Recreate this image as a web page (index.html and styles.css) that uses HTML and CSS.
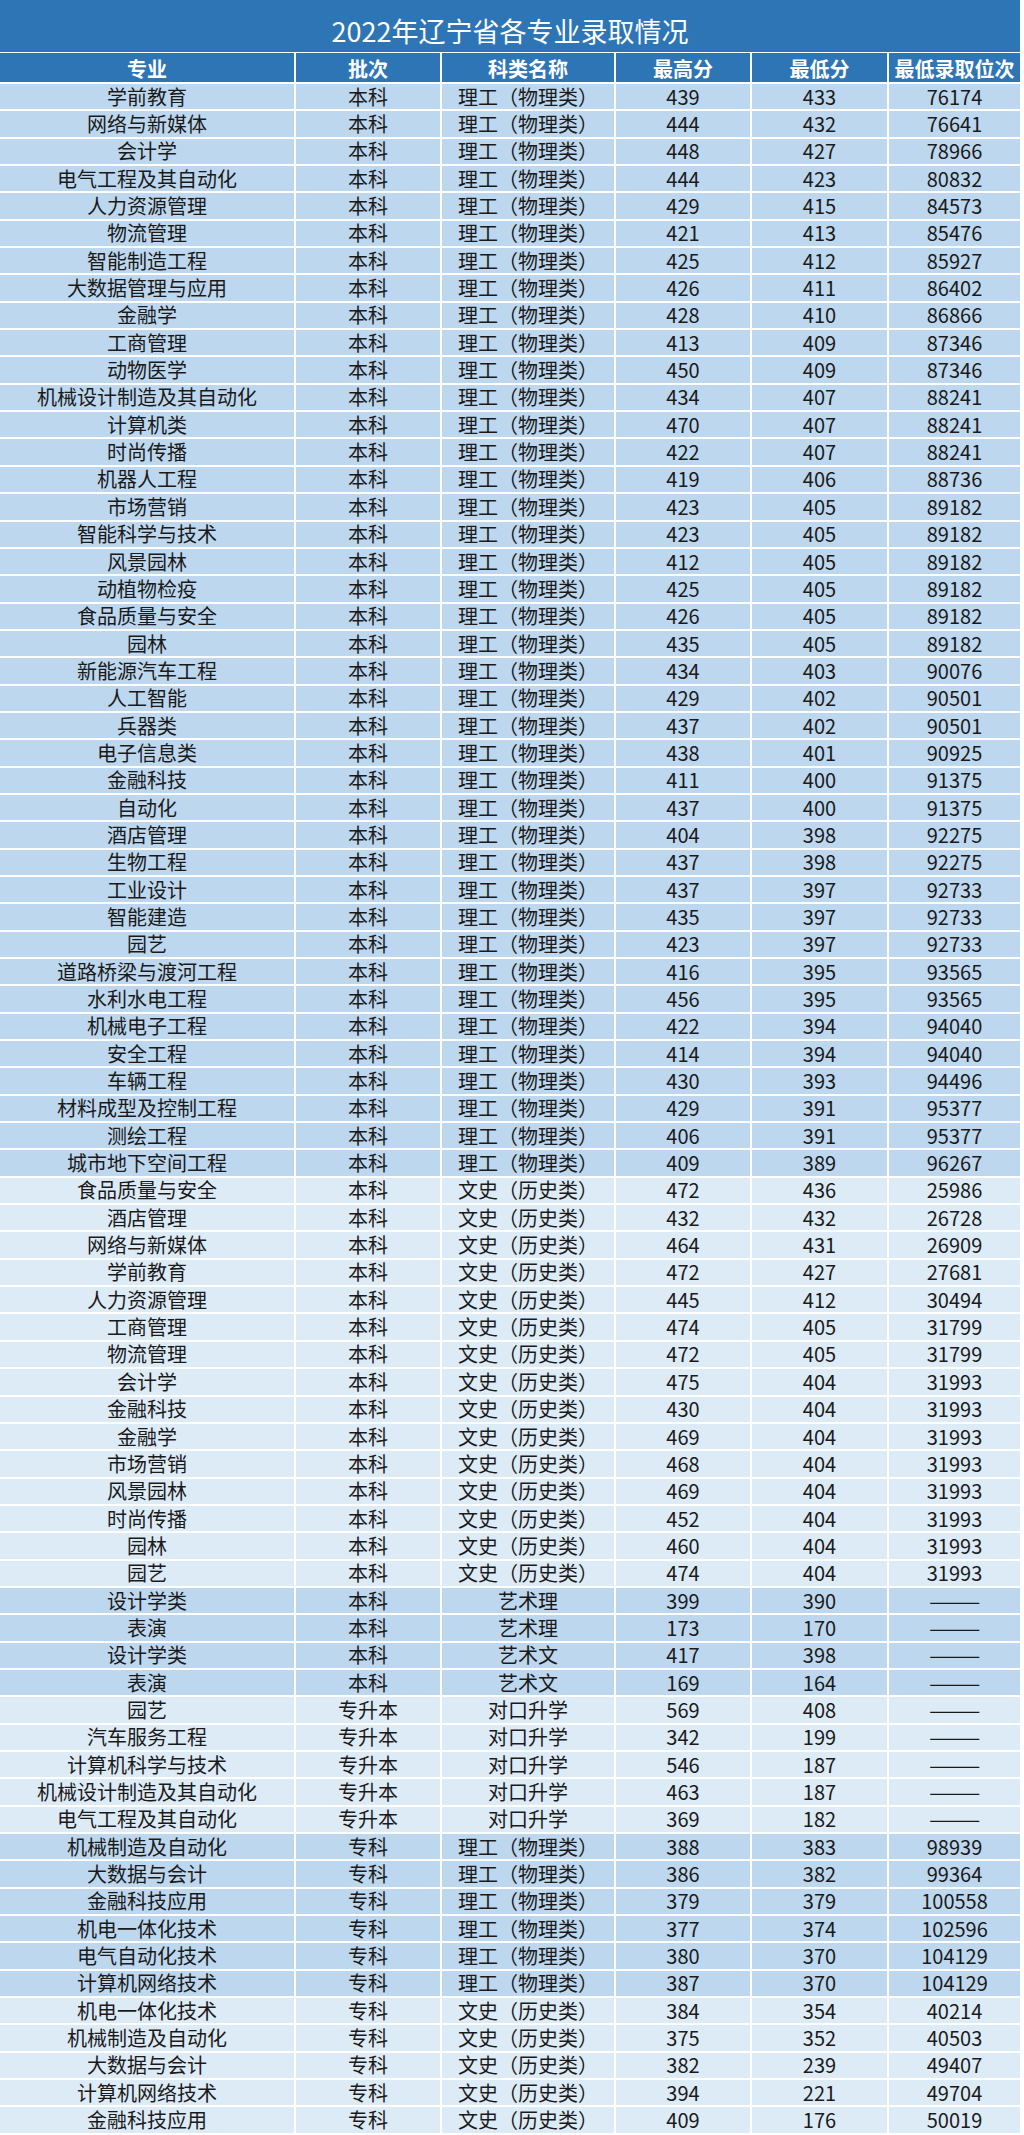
FILE: index.html
```html
<!DOCTYPE html>
<html lang="zh-CN">
<head>
<meta charset="utf-8">
<title>2022年辽宁省各专业录取情况</title>
<link rel="stylesheet" href="styles.css">
</head>
<body>
<div class="sheet">
<div class="title">2022年辽宁省各专业录取情况</div>
<div class="row head"><span>专业</span><span>批次</span><span>科类名称</span><span>最高分</span><span>最低分</span><span>最低录取位次</span></div>
<div class="row a"><span>学前教育</span><span>本科</span><span>理工（物理类）</span><span>439</span><span>433</span><span>76174</span></div>
<div class="row a"><span>网络与新媒体</span><span>本科</span><span>理工（物理类）</span><span>444</span><span>432</span><span>76641</span></div>
<div class="row a"><span>会计学</span><span>本科</span><span>理工（物理类）</span><span>448</span><span>427</span><span>78966</span></div>
<div class="row a"><span>电气工程及其自动化</span><span>本科</span><span>理工（物理类）</span><span>444</span><span>423</span><span>80832</span></div>
<div class="row a"><span>人力资源管理</span><span>本科</span><span>理工（物理类）</span><span>429</span><span>415</span><span>84573</span></div>
<div class="row a"><span>物流管理</span><span>本科</span><span>理工（物理类）</span><span>421</span><span>413</span><span>85476</span></div>
<div class="row a"><span>智能制造工程</span><span>本科</span><span>理工（物理类）</span><span>425</span><span>412</span><span>85927</span></div>
<div class="row a"><span>大数据管理与应用</span><span>本科</span><span>理工（物理类）</span><span>426</span><span>411</span><span>86402</span></div>
<div class="row a"><span>金融学</span><span>本科</span><span>理工（物理类）</span><span>428</span><span>410</span><span>86866</span></div>
<div class="row a"><span>工商管理</span><span>本科</span><span>理工（物理类）</span><span>413</span><span>409</span><span>87346</span></div>
<div class="row a"><span>动物医学</span><span>本科</span><span>理工（物理类）</span><span>450</span><span>409</span><span>87346</span></div>
<div class="row a"><span>机械设计制造及其自动化</span><span>本科</span><span>理工（物理类）</span><span>434</span><span>407</span><span>88241</span></div>
<div class="row a"><span>计算机类</span><span>本科</span><span>理工（物理类）</span><span>470</span><span>407</span><span>88241</span></div>
<div class="row a"><span>时尚传播</span><span>本科</span><span>理工（物理类）</span><span>422</span><span>407</span><span>88241</span></div>
<div class="row a"><span>机器人工程</span><span>本科</span><span>理工（物理类）</span><span>419</span><span>406</span><span>88736</span></div>
<div class="row a"><span>市场营销</span><span>本科</span><span>理工（物理类）</span><span>423</span><span>405</span><span>89182</span></div>
<div class="row a"><span>智能科学与技术</span><span>本科</span><span>理工（物理类）</span><span>423</span><span>405</span><span>89182</span></div>
<div class="row a"><span>风景园林</span><span>本科</span><span>理工（物理类）</span><span>412</span><span>405</span><span>89182</span></div>
<div class="row a"><span>动植物检疫</span><span>本科</span><span>理工（物理类）</span><span>425</span><span>405</span><span>89182</span></div>
<div class="row a"><span>食品质量与安全</span><span>本科</span><span>理工（物理类）</span><span>426</span><span>405</span><span>89182</span></div>
<div class="row a"><span>园林</span><span>本科</span><span>理工（物理类）</span><span>435</span><span>405</span><span>89182</span></div>
<div class="row a"><span>新能源汽车工程</span><span>本科</span><span>理工（物理类）</span><span>434</span><span>403</span><span>90076</span></div>
<div class="row a"><span>人工智能</span><span>本科</span><span>理工（物理类）</span><span>429</span><span>402</span><span>90501</span></div>
<div class="row a"><span>兵器类</span><span>本科</span><span>理工（物理类）</span><span>437</span><span>402</span><span>90501</span></div>
<div class="row a"><span>电子信息类</span><span>本科</span><span>理工（物理类）</span><span>438</span><span>401</span><span>90925</span></div>
<div class="row a"><span>金融科技</span><span>本科</span><span>理工（物理类）</span><span>411</span><span>400</span><span>91375</span></div>
<div class="row a"><span>自动化</span><span>本科</span><span>理工（物理类）</span><span>437</span><span>400</span><span>91375</span></div>
<div class="row a"><span>酒店管理</span><span>本科</span><span>理工（物理类）</span><span>404</span><span>398</span><span>92275</span></div>
<div class="row a"><span>生物工程</span><span>本科</span><span>理工（物理类）</span><span>437</span><span>398</span><span>92275</span></div>
<div class="row a"><span>工业设计</span><span>本科</span><span>理工（物理类）</span><span>437</span><span>397</span><span>92733</span></div>
<div class="row a"><span>智能建造</span><span>本科</span><span>理工（物理类）</span><span>435</span><span>397</span><span>92733</span></div>
<div class="row a"><span>园艺</span><span>本科</span><span>理工（物理类）</span><span>423</span><span>397</span><span>92733</span></div>
<div class="row a"><span>道路桥梁与渡河工程</span><span>本科</span><span>理工（物理类）</span><span>416</span><span>395</span><span>93565</span></div>
<div class="row a"><span>水利水电工程</span><span>本科</span><span>理工（物理类）</span><span>456</span><span>395</span><span>93565</span></div>
<div class="row a"><span>机械电子工程</span><span>本科</span><span>理工（物理类）</span><span>422</span><span>394</span><span>94040</span></div>
<div class="row a"><span>安全工程</span><span>本科</span><span>理工（物理类）</span><span>414</span><span>394</span><span>94040</span></div>
<div class="row a"><span>车辆工程</span><span>本科</span><span>理工（物理类）</span><span>430</span><span>393</span><span>94496</span></div>
<div class="row a"><span>材料成型及控制工程</span><span>本科</span><span>理工（物理类）</span><span>429</span><span>391</span><span>95377</span></div>
<div class="row a"><span>测绘工程</span><span>本科</span><span>理工（物理类）</span><span>406</span><span>391</span><span>95377</span></div>
<div class="row a"><span>城市地下空间工程</span><span>本科</span><span>理工（物理类）</span><span>409</span><span>389</span><span>96267</span></div>
<div class="row b"><span>食品质量与安全</span><span>本科</span><span>文史（历史类）</span><span>472</span><span>436</span><span>25986</span></div>
<div class="row b"><span>酒店管理</span><span>本科</span><span>文史（历史类）</span><span>432</span><span>432</span><span>26728</span></div>
<div class="row b"><span>网络与新媒体</span><span>本科</span><span>文史（历史类）</span><span>464</span><span>431</span><span>26909</span></div>
<div class="row b"><span>学前教育</span><span>本科</span><span>文史（历史类）</span><span>472</span><span>427</span><span>27681</span></div>
<div class="row b"><span>人力资源管理</span><span>本科</span><span>文史（历史类）</span><span>445</span><span>412</span><span>30494</span></div>
<div class="row b"><span>工商管理</span><span>本科</span><span>文史（历史类）</span><span>474</span><span>405</span><span>31799</span></div>
<div class="row b"><span>物流管理</span><span>本科</span><span>文史（历史类）</span><span>472</span><span>405</span><span>31799</span></div>
<div class="row b"><span>会计学</span><span>本科</span><span>文史（历史类）</span><span>475</span><span>404</span><span>31993</span></div>
<div class="row b"><span>金融科技</span><span>本科</span><span>文史（历史类）</span><span>430</span><span>404</span><span>31993</span></div>
<div class="row b"><span>金融学</span><span>本科</span><span>文史（历史类）</span><span>469</span><span>404</span><span>31993</span></div>
<div class="row b"><span>市场营销</span><span>本科</span><span>文史（历史类）</span><span>468</span><span>404</span><span>31993</span></div>
<div class="row b"><span>风景园林</span><span>本科</span><span>文史（历史类）</span><span>469</span><span>404</span><span>31993</span></div>
<div class="row b"><span>时尚传播</span><span>本科</span><span>文史（历史类）</span><span>452</span><span>404</span><span>31993</span></div>
<div class="row b"><span>园林</span><span>本科</span><span>文史（历史类）</span><span>460</span><span>404</span><span>31993</span></div>
<div class="row b"><span>园艺</span><span>本科</span><span>文史（历史类）</span><span>474</span><span>404</span><span>31993</span></div>
<div class="row a"><span>设计学类</span><span>本科</span><span>艺术理</span><span>399</span><span>390</span><span><i class="dash">——</i></span></div>
<div class="row a"><span>表演</span><span>本科</span><span>艺术理</span><span>173</span><span>170</span><span><i class="dash">——</i></span></div>
<div class="row a"><span>设计学类</span><span>本科</span><span>艺术文</span><span>417</span><span>398</span><span><i class="dash">——</i></span></div>
<div class="row a"><span>表演</span><span>本科</span><span>艺术文</span><span>169</span><span>164</span><span><i class="dash">——</i></span></div>
<div class="row b"><span>园艺</span><span>专升本</span><span>对口升学</span><span>569</span><span>408</span><span><i class="dash">——</i></span></div>
<div class="row b"><span>汽车服务工程</span><span>专升本</span><span>对口升学</span><span>342</span><span>199</span><span><i class="dash">——</i></span></div>
<div class="row b"><span>计算机科学与技术</span><span>专升本</span><span>对口升学</span><span>546</span><span>187</span><span><i class="dash">——</i></span></div>
<div class="row b"><span>机械设计制造及其自动化</span><span>专升本</span><span>对口升学</span><span>463</span><span>187</span><span><i class="dash">——</i></span></div>
<div class="row b"><span>电气工程及其自动化</span><span>专升本</span><span>对口升学</span><span>369</span><span>182</span><span><i class="dash">——</i></span></div>
<div class="row a"><span>机械制造及自动化</span><span>专科</span><span>理工（物理类）</span><span>388</span><span>383</span><span>98939</span></div>
<div class="row a"><span>大数据与会计</span><span>专科</span><span>理工（物理类）</span><span>386</span><span>382</span><span>99364</span></div>
<div class="row a"><span>金融科技应用</span><span>专科</span><span>理工（物理类）</span><span>379</span><span>379</span><span>100558</span></div>
<div class="row a"><span>机电一体化技术</span><span>专科</span><span>理工（物理类）</span><span>377</span><span>374</span><span>102596</span></div>
<div class="row a"><span>电气自动化技术</span><span>专科</span><span>理工（物理类）</span><span>380</span><span>370</span><span>104129</span></div>
<div class="row a"><span>计算机网络技术</span><span>专科</span><span>理工（物理类）</span><span>387</span><span>370</span><span>104129</span></div>
<div class="row b"><span>机电一体化技术</span><span>专科</span><span>文史（历史类）</span><span>384</span><span>354</span><span>40214</span></div>
<div class="row b"><span>机械制造及自动化</span><span>专科</span><span>文史（历史类）</span><span>375</span><span>352</span><span>40503</span></div>
<div class="row b"><span>大数据与会计</span><span>专科</span><span>文史（历史类）</span><span>382</span><span>239</span><span>49407</span></div>
<div class="row b"><span>计算机网络技术</span><span>专科</span><span>文史（历史类）</span><span>394</span><span>221</span><span>49704</span></div>
<div class="row b"><span>金融科技应用</span><span>专科</span><span>文史（历史类）</span><span>409</span><span>176</span><span>50019</span></div>
</div>
</body>
</html>
```

FILE: styles.css
```css
html, body {
  margin: 0;
  padding: 0;
  background: #ffffff;
}

.sheet {
  width: 1020px;
  font-family: "Noto Sans CJK SC", "Noto Sans", sans-serif;
  color: #1a1a1a;
}

.title {
  box-sizing: border-box;
  height: 53px;
  border-bottom: 1px solid #ffffff;
  background: #2e75b6;
  color: #ffffff;
  font-size: 27px;
  line-height: 1;
  display: flex;
  align-items: center;
  justify-content: center;
  padding-top: 8px;
}

.row {
  box-sizing: border-box;
  display: grid;
  grid-template-columns: 296px 146px 174px 136px 137px 131px;
  height: 27.35px;
  border-bottom: 2px solid #ffffff;
  font-size: 20px;
  line-height: 1;
}

.row span {
  box-sizing: border-box;
  display: flex;
  align-items: center;
  justify-content: center;
  border-right: 2px solid #ffffff;
  white-space: nowrap;
}

.row span:last-child {
  border-right: 0;
}

.head {
  height: 31px;
  background: #2e75b6;
  color: #ffffff;
  font-weight: 700;
}

.head span {
  padding-top: 2px;
}

.a {
  background: #bdd7ee;
}

.b {
  background: #ddebf7;
}

.dash {
  display: inline-block;
  font-style: normal;
  transform: scaleX(1.55);
}
```
